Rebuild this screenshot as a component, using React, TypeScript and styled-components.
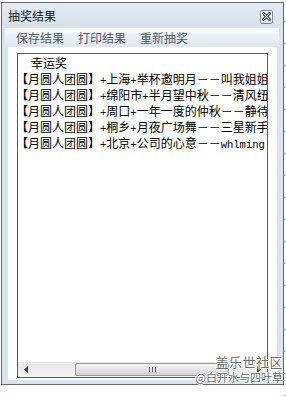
import React from 'react';
import styled, { createGlobalStyle } from 'styled-components';

const rows = [
  '【月圆人团圆】+上海+举杯邀明月－－叫我姐姐',
  '【月圆人团圆】+绵阳市+半月望中秋－－清风纽扣',
  '【月圆人团圆】+周口+一年一度的仲秋－－静待花开',
  '【月圆人团圆】+桐乡+月夜广场舞－－三星新手',
  '【月圆人团圆】+北京+公司的心意－－whlming',
];

const menu = ['保存结果', '打印结果', '重新抽奖'];

// split ascii runs out so they get the narrow mono face
const renderLine = (text: string) =>
  text.split(/([\x20-\x7e]+)/).map((part, i) =>
    /^[\x20-\x7e]+$/.test(part) ? <Latin key={i}>{part}</Latin> : part
  );

const CloseIcon: React.FC = () => (
  <svg width="9" height="9" viewBox="0 0 9 9">
    <path d="M1.5 1.5 L7.5 7.5 M7.5 1.5 L1.5 7.5" stroke="#4a4a4a" strokeWidth="3" strokeLinecap="square" />
    <path d="M1.5 1.5 L7.5 7.5 M7.5 1.5 L1.5 7.5" stroke="#ffffff" strokeWidth="1" />
  </svg>
);

const App: React.FC = () => {
  return (
    <>
      <GlobalStyle />
      <Page>
        <Window>
          <TitleBar>
            <Title>抽奖结果</Title>
            <CloseButton>
              <CloseIcon />
            </CloseButton>
          </TitleBar>
          <MenuBar>
            {menu.map((m) => (
              <MenuItem key={m}>{m}</MenuItem>
            ))}
          </MenuBar>
          <Panel>
            <TextBox>
              <Content>
                <Line indent>幸运奖</Line>
                {rows.map((r) => (
                  <Line key={r}>{renderLine(r)}</Line>
                ))}
              </Content>
              <HScroll>
                <ArrowButton>
                  <svg width="4" height="7" viewBox="0 0 4 7">
                    <path d="M4 0 L0 3.5 L4 7 Z" fill="#3c3c3c" />
                  </svg>
                </ArrowButton>
                <Track>
                  <Thumb>
                    <Grip />
                    <Grip />
                    <Grip />
                  </Thumb>
                </Track>
                <ArrowButton>
                  <svg width="4" height="7" viewBox="0 0 4 7">
                    <path d="M0 0 L4 3.5 L0 7 Z" fill="#3c3c3c" />
                  </svg>
                </ArrowButton>
              </HScroll>
            </TextBox>
          </Panel>
          <BottomStrip />
          <Watermark>
            <MarkTop>盖乐世社区</MarkTop>
            <MarkBottom>@白开水与四叶草</MarkBottom>
          </Watermark>
        </Window>
      </Page>
    </>
  );
};

export default App;

const GlobalStyle = createGlobalStyle`
  html, body {
    margin: 0;
    padding: 0;
    background: #ffffff;
  }
  body {
    font-family: "Noto Sans CJK SC", "Liberation Sans", sans-serif;
  }
`;

const Page = styled.div`
  width: 286px;
  height: 397px;
  padding: 2px 0 0 1px;
  box-sizing: border-box;
  background:
    repeating-linear-gradient(to bottom, transparent 0 21px, #b4b4b4 21px 22px) right top / 2px 100% no-repeat,
    #ffffff;
  overflow: hidden;
`;

const Window = styled.div`
  position: relative;
  width: 283px;
  height: 383px;
  box-sizing: border-box;
  border: 1px solid #666a70;
  background: #d9e4f2;
  display: flex;
  flex-direction: column;
`;

const TitleBar = styled.div`
  height: 25px;
  flex: none;
  display: flex;
  align-items: center;
  justify-content: space-between;
  padding: 0 10px 0 6px;
  background: linear-gradient(to bottom, #e4eaf2, #d6dfeb);
`;

const Title = styled.span`
  font-size: 12px;
  color: #202020;
  line-height: 14px;
`;

const CloseButton = styled.div`
  width: 11px;
  height: 12px;
  margin-top: 2px;
  border: 1px solid #7d8ca0;
  border-radius: 2px;
  background: linear-gradient(to bottom, #f7f9fc, #dfe5ee);
  display: flex;
  align-items: center;
  justify-content: center;
`;

const MenuBar = styled.div`
  height: 19px;
  flex: none;
  margin: 0 4px 0 3px;
  padding-left: 11px;
  display: flex;
  align-items: center;
  gap: 14px;
  background: linear-gradient(to bottom, #f8fafd, #e9eef5 60%, #dde4ee);
`;

const MenuItem = styled.span`
  font-size: 12px;
  color: #555a60;
  line-height: 14px;
`;

const Panel = styled.div`
  flex: 1;
  margin: 0 6px 0 6px;
  padding: 6px 9px 2px 9px;
  background: #ffffff;
  display: flex;
  min-height: 0;
`;

const TextBox = styled.div`
  flex: 1;
  border: 1px solid #5a5a5a;
  display: flex;
  flex-direction: column;
  min-width: 0;
  background: #ffffff;
`;

const Content = styled.div`
  flex: 1;
  padding: 1px 0 0 0;
  overflow: hidden;
`;

const Line = styled.div<{ indent?: boolean }>`
  font-family: "Noto Sans CJK SC", sans-serif;
  font-size: 12px;
  line-height: 16px;
  height: 16px;
  color: #000000;
  white-space: nowrap;
  padding-left: ${(p) => (p.indent ? '15px' : '0')};
  margin-left: -2px;
`;

const Latin = styled.span`
  font-family: "Liberation Mono", monospace;
  font-size: 10.5px;
`;

const HScroll = styled.div`
  height: 15px;
  flex: none;
  display: flex;
  background: linear-gradient(to bottom, #e8e8e8, #f4f4f4);
`;

const ArrowButton = styled.div`
  width: 16px;
  flex: none;
  display: flex;
  align-items: center;
  justify-content: center;
`;

const Track = styled.div`
  flex: 1;
  display: flex;
  align-items: stretch;
  padding: 1px 0 1px 41px;
`;

const Thumb = styled.div`
  width: 154px;
  box-sizing: border-box;
  border: 1px solid #9a9a9a;
  border-radius: 2px;
  background: linear-gradient(to bottom, #f6f6f6, #e4e4e4 50%, #d2d2d2);
  display: flex;
  align-items: center;
  justify-content: center;
  gap: 2px;
`;

const Grip = styled.span`
  width: 1px;
  height: 5px;
  background: #5e5e5e;
`;

const BottomStrip = styled.div`
  height: 4px;
  flex: none;
`;

const Watermark = styled.div`
  position: absolute;
  right: 0;
  bottom: -1px;
  display: flex;
  flex-direction: column;
  align-items: flex-end;
  pointer-events: none;
`;

const MarkTop = styled.span`
  font-size: 13px;
  line-height: 16px;
  color: #6e6e6e;
  letter-spacing: 0.5px;
  text-shadow: 1px 0 0 #fff, -1px 0 0 #fff, 0 1px 0 #fff, 0 -1px 0 #fff;
`;

const MarkBottom = styled.span`
  font-size: 11px;
  line-height: 15px;
  color: #6e6e6e;
  text-shadow: 1px 0 0 #fff, -1px 0 0 #fff, 0 1px 0 #fff, 0 -1px 0 #fff;
`;
